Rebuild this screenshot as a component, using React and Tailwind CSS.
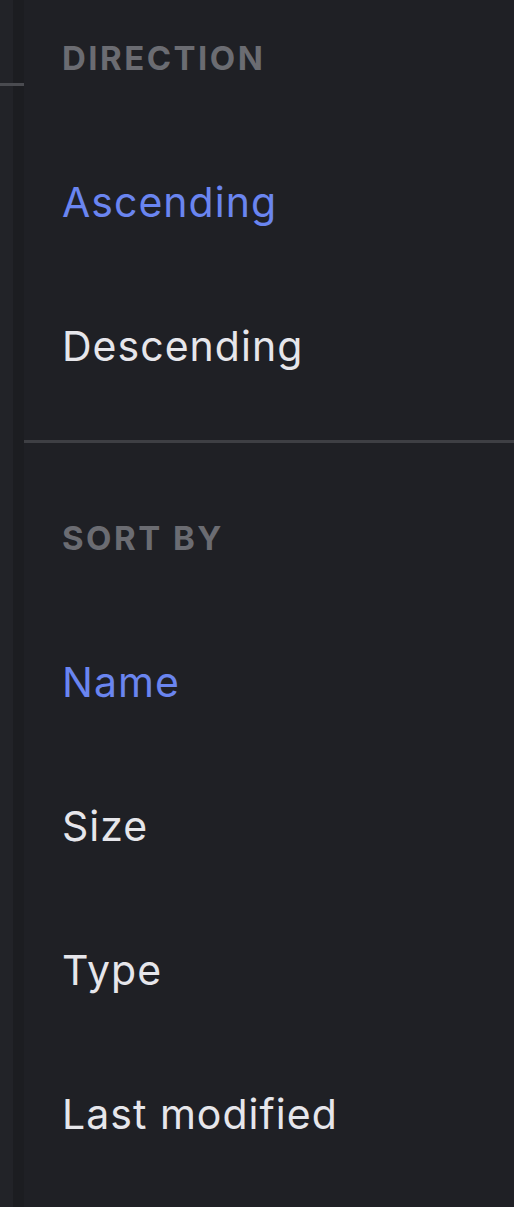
export default function App() {
  const font = { fontFamily: 'Inter, "Noto Sans", sans-serif' };
  const Header = ({ children }) => (
    <div className="h-[116px] flex items-center pl-[38px] pt-[1px] text-[33px] font-bold tracking-[0.075em] text-[#6b6c72] uppercase">
      {children}
    </div>
  );
  const Row = ({ children, active }) => (
    <div
      className={`h-[144px] flex items-center pl-[38px] text-[41px] tracking-[0.025em] ${
        active ? "text-[#6a85f0]" : "text-[#e6e6eb]"
      }`}
    >
      {children}
    </div>
  );
  return (
    <div className="w-[514px] h-[1207px] flex bg-[#1f2025] overflow-hidden" style={font}>
      <div className="w-[24px] shrink-0 flex">
        <div className="w-[13px] bg-[#222328] flex flex-col">
          <div className="h-[83px]" />
          <div className="h-[3px] bg-[#4a4b50]" />
        </div>
        <div className="w-[11px] bg-[#1c1d21] flex flex-col">
          <div className="h-[83px]" />
          <div className="h-[3px] bg-[#4a4b50]" />
        </div>
      </div>
      <div className="flex-1 flex flex-col">
        <Header>Direction</Header>
        <div className="pt-[15px]">
          <Row active>Ascending</Row>
          <Row>Descending</Row>
        </div>
        <div className="h-[21px]" />
        <div className="h-[3px] bg-[#3e3f44]" />
        <div className="h-[37px]" />
        <Header>Sort by</Header>
        <div className="pt-[15px]">
          <Row active>Name</Row>
          <Row>Size</Row>
          <Row>Type</Row>
          <Row>Last modified</Row>
        </div>
      </div>
    </div>
  );
}
